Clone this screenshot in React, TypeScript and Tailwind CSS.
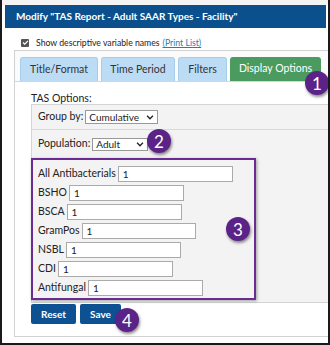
import React from 'react'

const font = { fontFamily: 'Lato, "Open Sans", Arial, sans-serif' }

function Badge({ n, className }: { n: string; className: string }) {
  return (
    <div className={`absolute w-[24px] h-[24px] rounded-full bg-[#5b2388] text-white flex items-center justify-center text-[17px] leading-none shadow-[1px_2px_3px_rgba(0,0,0,0.45)] ${className}`}>
      {n}
    </div>
  )
}

function Chevron() {
  return (
    <svg width="8" height="5" viewBox="0 0 9 6" className="ml-auto">
      <path d="M1 1l3.5 3.5L8 1" fill="none" stroke="#222" strokeWidth="1.6" />
    </svg>
  )
}

const fields = [
  { label: 'All Antibacterials', w: 'w-[115px]' },
  { label: 'BSHO', w: 'w-[115px]' },
  { label: 'BSCA', w: 'w-[115px]' },
  { label: 'GramPos', w: 'w-[114px]' },
  { label: 'NSBL', w: 'w-[115px]' },
  { label: 'CDI', w: 'w-[115px]' },
  { label: 'Antifungal', w: 'w-[115px]' },
]

export default function App() {
  return (
    <div style={font} className="relative w-[330px] h-[345px] overflow-hidden bg-white border-l-2 border-r-2 border-b-2 border-[#1a1a1a] text-[#222]">
      <div className="h-[5px] bg-[#f4f4f4]" />
      {/* Header */}
      <div className="ml-[3px] mr-[2px] h-[23px] bg-[#0b4f8c] text-white text-[10px] font-bold flex items-center pl-[11px]">
        Modify "TAS Report - Adult SAAR Types - Facility"
      </div>

      {/* Checkbox row */}
      <div className="mt-[10px] ml-[19px] flex items-center h-[9px] text-[8.7px]">
        <span className="w-[8px] h-[8px] bg-[#555] rounded-[1px] flex items-center justify-center">
          <svg width="7" height="7" viewBox="0 0 7 7"><path d="M1 3.5l1.7 1.7L6 1.8" fill="none" stroke="#fff" strokeWidth="1.2" /></svg>
        </span>
        <span className="ml-[7px]">Show descriptive variable names</span>
        <span className="ml-[3px] text-[#2a7bb8] underline">(Print List)</span>
      </div>

      {/* Panel */}
      <div className="mt-[3px] ml-[12px] w-[340px] border border-[#d2d2d2] bg-white">
        <div className="flex gap-[3px] pl-[5px] pt-[6px] border-b border-[#d6d6d6] bg-[#fbfbfb]">
          <div className="w-[78px] h-[24px] rounded-t-[3px] bg-[#bcdcf5] border border-b-0 border-[#a8cdea] flex items-center justify-center text-[10.5px] text-[#333]">Title/Format</div>
          <div className="w-[74px] h-[24px] rounded-t-[3px] bg-[#bcdcf5] border border-b-0 border-[#a8cdea] flex items-center justify-center text-[10.5px] text-[#333]">Time Period</div>
          <div className="w-[49px] h-[24px] rounded-t-[3px] bg-[#bcdcf5] border border-b-0 border-[#a8cdea] flex items-center justify-center text-[10.5px] text-[#333]">Filters</div>
          <div className="w-[91px] h-[24px] rounded-t-[3px] bg-[#4b9a5f] flex items-center justify-center text-[10.5px] text-white">Display Options</div>
        </div>

        <div className="pl-[16px] pb-[12px]">
          <div className="mt-[9px] text-[10.5px] leading-[14px]">TAS Options:</div>

          <div className="mt-[-1px] border border-[#d4d4d4] bg-[#f3f3f3]">
            <div className="h-[25px] flex items-center pl-[6px] border-b border-[#d9d9d9] text-[10.5px]">
              Group by:
              <div className="ml-[2px] w-[73px] h-[14px] bg-white border border-[#999] flex items-center px-[3px] text-[10px]">
                Cumulative
                <Chevron />
              </div>
            </div>
            <div className="h-[28px] flex items-center pl-[6px] text-[10.5px]">
              Population:
              <div className="ml-[2px] w-[56px] h-[13px] bg-white border border-[#999] flex items-center px-[3px] text-[10px]">
                Adult
                <Chevron />
              </div>
            </div>
            <div className="relative -ml-px w-[225px] border-2 border-[#6a2c92] shadow-[1px_1px_3px_rgba(0,0,0,0.35)] bg-[#f3f3f3] pt-[6px] pb-[2px] pl-[5px] flex flex-col gap-[3px]">
              {fields.map(f => (
                <div key={f.label} className="flex items-center h-[16px] text-[10.5px]">
                  {f.label}
                  <div className={`ml-[2px] ${f.w} h-[16px] bg-white border border-[#aaa] flex items-center pl-[4px] text-[10px]`}>1</div>
                </div>
              ))}
            </div>
            <div className="h-[2px]" />
          </div>

          <div className="mt-px flex gap-[4px]">
            <button className="w-[45px] h-[20px] bg-[#0d5192] text-white text-[10px] font-bold rounded-[2px]">Reset</button>
            <button className="w-[41px] h-[20px] bg-[#0d5192] text-white text-[10px] font-bold rounded-[2px]">Save</button>
          </div>
        </div>
      </div>

      <Badge n="1" className="left-[303px] top-[71px]" />
      <Badge n="2" className="left-[145px] top-[129px]" />
      <Badge n="3" className="left-[224px] top-[217px]" />
      <Badge n="4" className="left-[113px] top-[308px]" />
    </div>
  )
}
